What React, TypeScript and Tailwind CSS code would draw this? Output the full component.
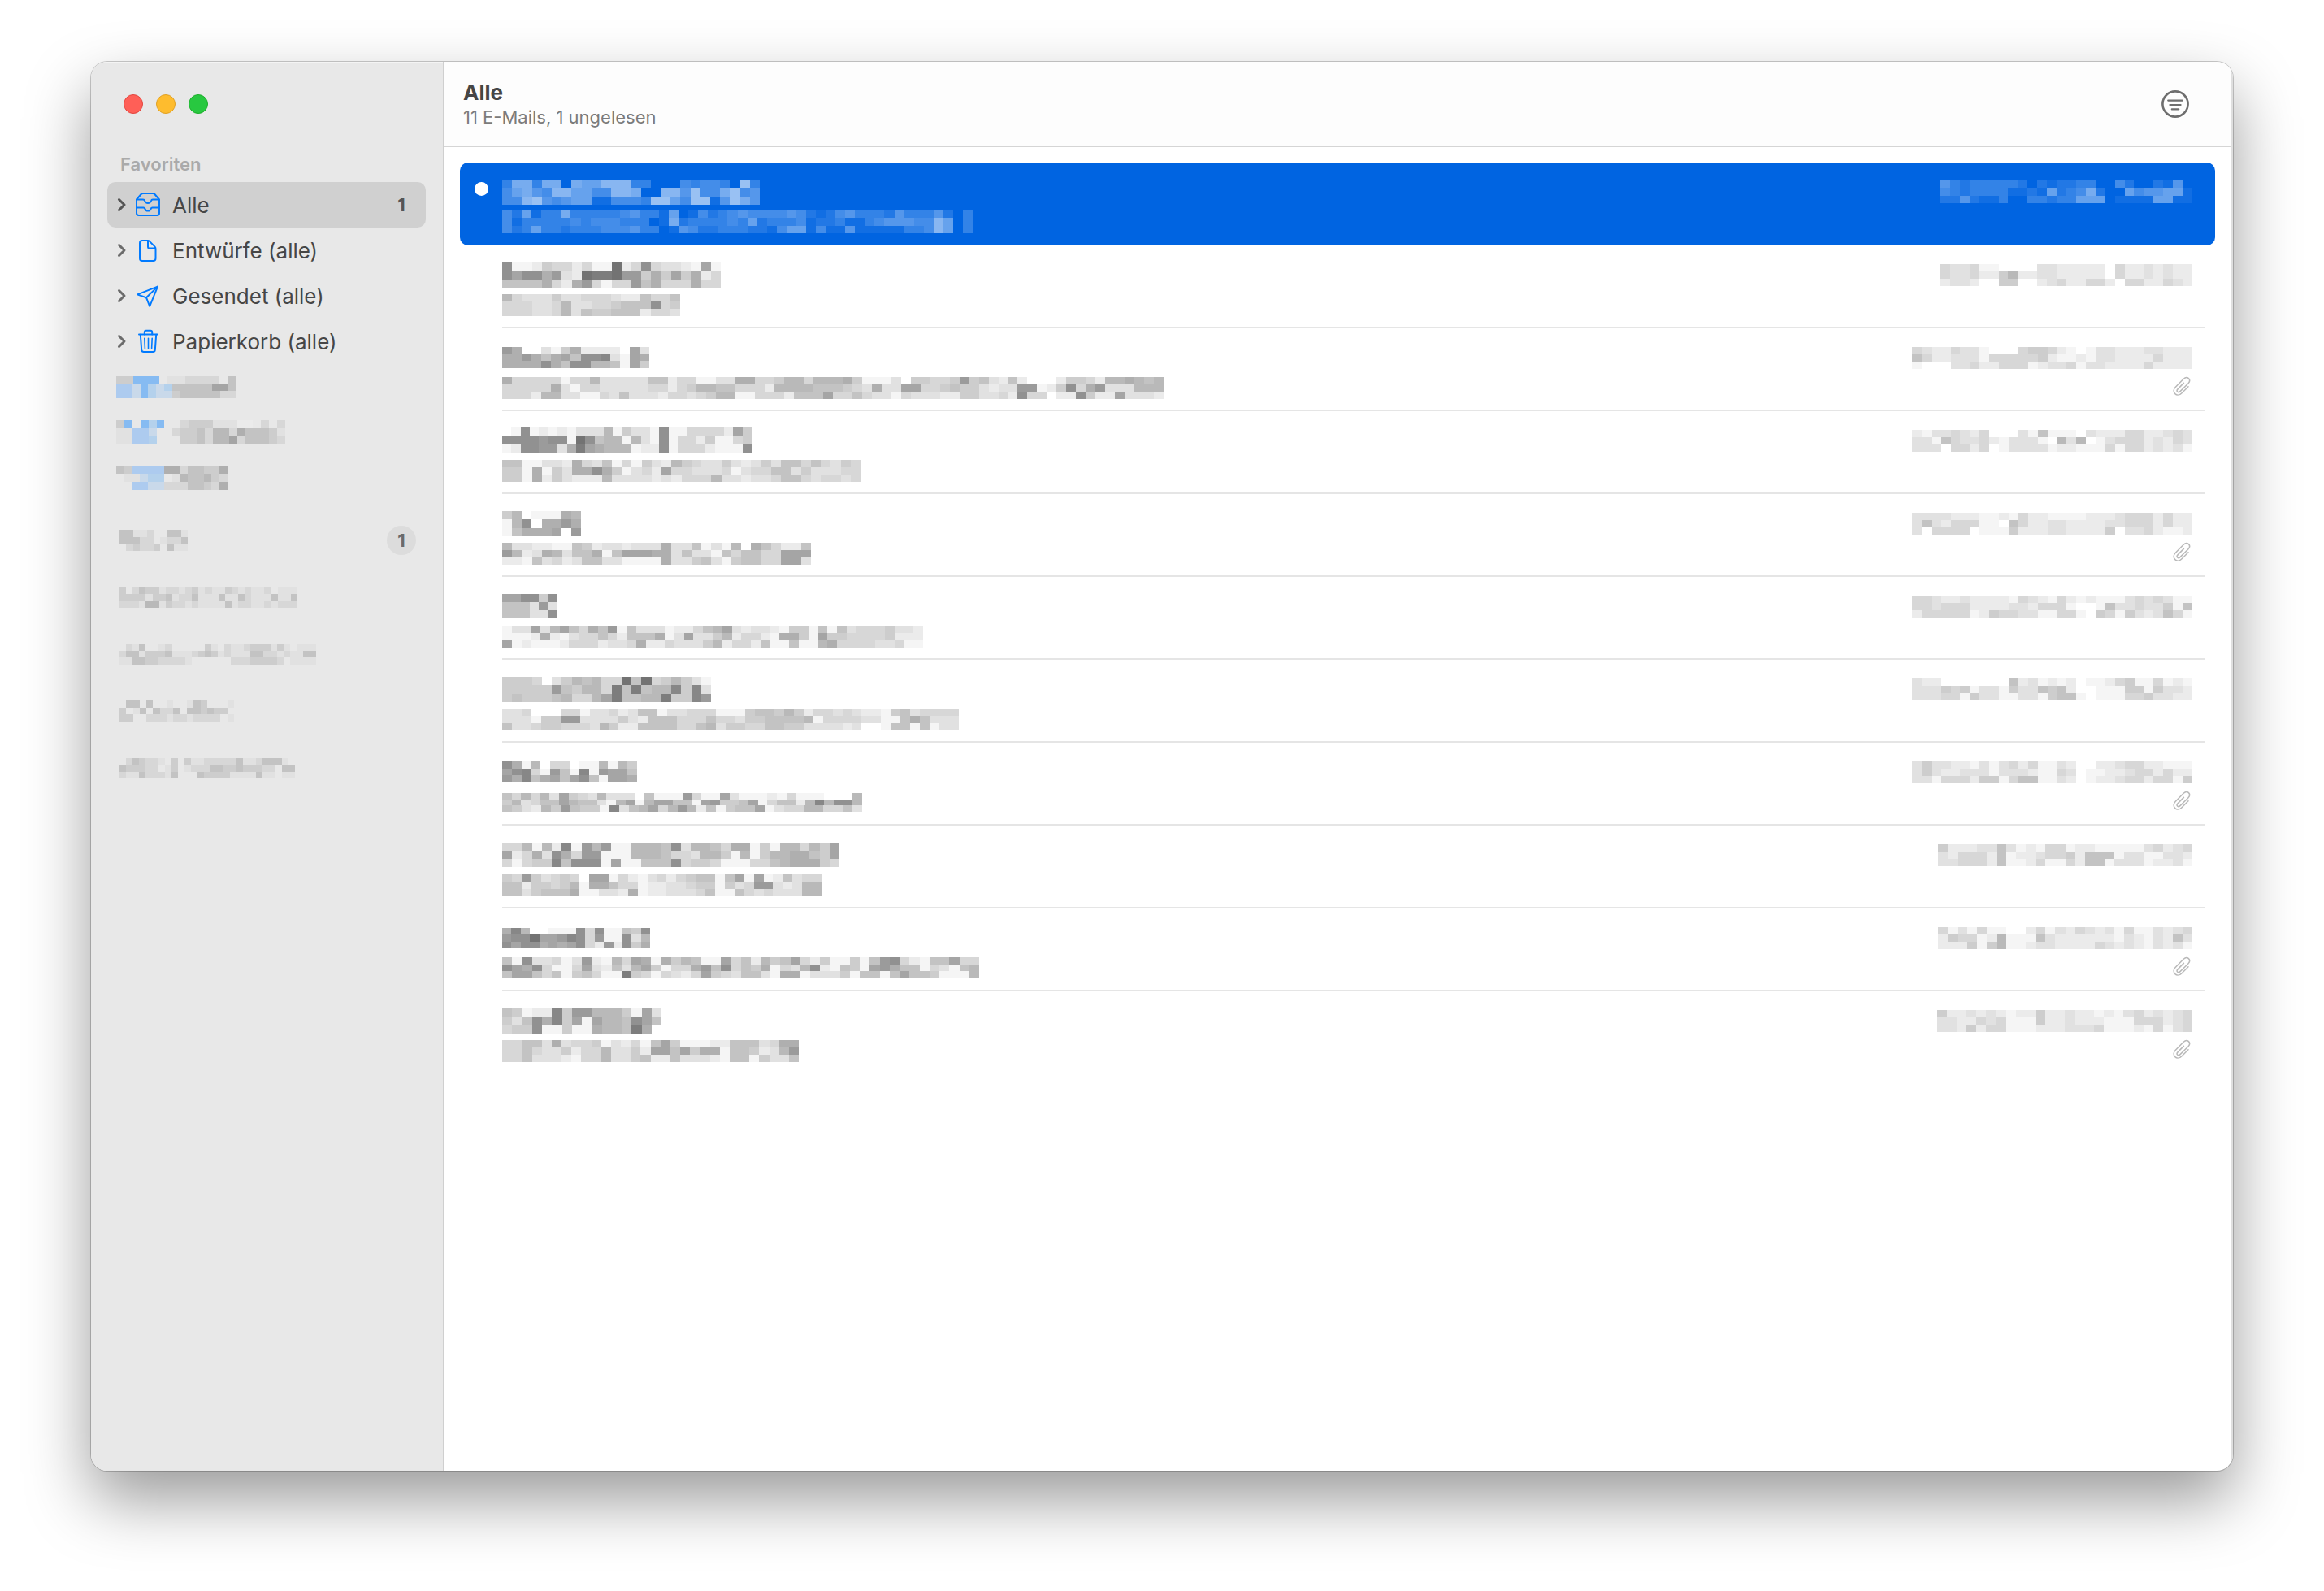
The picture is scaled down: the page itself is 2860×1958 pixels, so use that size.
import type { ReactNode } from "react";
import clsx from "clsx";

type Redaction = { w: number; h: number; rows: string[] };

type Mail = {
  title: Redaction;
  subject: Redaction;
  date: Redaction;
  attachment?: boolean;
  unread?: boolean;
};

const tints: Record<string, string> = {
  p: "#86bbf2",
  q: "#adcbef",
  r: "#c9d9ea",
  s: "#b4d1ec",
};

const accounts: Redaction[] = [
  { w: 148, h: 27, rows: ["55ppp.334444.6", "qqrpsrs66666996", "qqrpsrr56666644"] },
  { w: 208, h: 30, rows: ["5p.psp..455533322.4.4", "33qqr..45564774866653", "33qqs...5564779466654"] },
  { w: 137, h: 30, rows: ["65qqqq88466558", ".33rss.3766754", "..qqrr44466548"] },
];

const mailboxes: { name: Redaction; count?: number }[] = [
  { name: { w: 84, h: 26, rows: ["66334..663", "66644.3446", ".45445.633"] }, count: 1 },
  { name: { w: 219, h: 25, rows: ["5.465534434534335434334.333", "555535563446333633643336336", "444377354434333363443343444"] } },
  { name: { w: 242, h: 26, rows: [".436..34.....53.4334555353.333", "466355563334565343336644343366", "33665544443......44455554.3333"] } },
  { name: { w: 141, h: 26, rows: [".66.6..3..365...3", "5.36.6446.665655.", "55..44434434444.3"] } },
  { name: { w: 216, h: 25, rows: [".465443.5.5334444463346663.", "655544.35.34446655655544.66", "433644436...655553333633.33"] } },
];

const mails: Mail[] = [
  {
    unread: true,
    title: { w: 317, h: 31, rows: ["37737707668883300043443093", "46754886644887008859447945", "44895456611444399649915975"] },
    subject: {
      w: 579,
      h: 28,
      rows: [
        "426133733333453316014234544445421245333253335203",
        "413333343444333017233334362333412231134555448603",
        "423633233344453301542233322146614115111113348603",
      ],
    },
    date: { w: 310, h: 28, rows: ["53233333202122330042002150", "43233331121623472006455661", "22521130033233666011116611"] },
  },
  {
    title: { w: 269, h: 31, rows: ["b1125442411e24b4332191", "b9bb8a32eddeaa58595824", "66668428a4144a68444844"] },
    subject: { w: 219, h: 27, rows: ["743335334443226446", "444334733445666b45", "444334736556662443"] },
    date: { w: 310, h: 27, rows: ["43341100003322222042232322", "43342257223322222042232322", "23320055002342244204422432"] },
  },
  {
    attachment: true,
    title: { w: 181, h: 26, rows: ["a80031582222093", "88a86896bbc3198", "8888b86bb776195"] },
    subject: {
      w: 814,
      h: 27,
      rows: [
        "84444414473333366244113388445774777851113055445a5632620002554277876 7".replace(" ", ""),
        "44444831443333344245776644427777666543833994456553233aa125b48a333777",
        "44427733114363332443457711444266694464331433322553342b44022b52293332",
      ],
    },
    date: { w: 345, h: 27, rows: ["43224331000455421013322233222", "64223331444445211213322224222", "10003342244412334133222242222"] },
  },
  {
    title: { w: 307, h: 32, rows: ["01b12121333715331b114444295", "bbbbabb1eb6771731b144251145", "12bbaa38d98777122b14442111b"] },
    subject: {
      w: 441,
      h: 27,
      rows: [
        "661133284361415327543353235366464354",
        "551815388b85134294433341344663533344",
        "551825322273333232444733233466434434",
      ],
    },
    date: { w: 345, h: 27, rows: ["21334324000316111032224422343", "33164334213331073701344423243", "33304424013333122111414423231"] },
  },
  {
    attachment: true,
    title: { w: 97, h: 31, rows: ["57011187", "17b088a8", "1688890a"] },
    subject: {
      w: 380,
      h: 27,
      rows: ["7332211652332333833613170864226", "a723873668169998836331646644999", "2216342366331111833563156644993"],
    },
    date: { w: 345, h: 27, rows: ["33332221121422111122234442422", "36324441106422332222334442422", "30444401115222332222503342112"] },
  },
  {
    title: { w: 68, h: 30, rows: ["99bb5b", "6663a3", "66633b"] },
    subject: {
      w: 518,
      h: 27,
      rows: [
        "1339379648 6a16333122467932332155161634445332".replace(" ", ""),
        "11128213446426668139335724421885195544445222",
        "91211124442334822433357244261161178444433411",
      ],
    },
    date: { w: 345, h: 27, rows: ["44322322221432142121113434311", "44344422223324441001633433516", "24444412544331144105415323641"] },
  },
  {
    title: { w: 257, h: 31, rows: ["555403576744e6e457531", "55555a65774d6d677c5c3", "56555674479d6677d55ca"] },
    subject: {
      w: 562,
      h: 27,
      rows: [
        "33400044133423661334441115665752443432215634444",
        "333155aa333353266644464435566667144443311686333",
        "63345544437522666644673554466553333230016616133",
      ],
    },
    date: { w: 345, h: 27, rows: ["32200000006231212011245114121", "33354513315336562001115515332", "33344153311331566101114453322"] },
  },
  {
    attachment: true,
    title: { w: 166, h: 26, rows: ["b8170440117175", "9bc41a61c1a996", "a8c68969b61998"] },
    subject: {
      w: 443,
      h: 23,
      rows: ["6474739543733306111a411931112141110007", "5734669766317917996619a5569146627c7bb7", "653275a6551c367947a726156691344774463"],
    },
    date: { w: 345, h: 27, rows: ["35332213134241132002234422111", "35322333133321143011223442422", "33144425514661132012234424415"] },
  },
  {
    title: { w: 415, h: 30, rows: ["447172c1a7a117776b3776488151774759", "92483b84aa111777644377517157788659", "41455c6bbb1911666b4554111446788854"] },
    subject: {
      w: 393,
      h: 27,
      rows: ["54a534540991421342456616919126344", "66255457188644122334551534aa32377", "663566681133281223334611643433377"],
    },
    date: { w: 313, h: 27, rows: ["52223363121441221111134234", "32444261223445266613311332", "33444261124114266133312231"] },
  },
  {
    attachment: true,
    title: { w: 182, h: 25, rows: ["8c700111b4b1165b", "abbe99acb4a11b37", "b9bb8989b42a2b58"] },
    subject: {
      w: 587,
      h: 26,
      rows: [
        "61b33413a21749818576119462756942511516ab42166944",
        "b98b411493263795144 8a6b46581437b216519a866143167".replace(" ", ""),
        "699646156411d54143249543663188133351661696651117",
      ],
    },
    date: { w: 313, h: 27, rows: ["41314110024132432314113234", "25441271116322222213213263", "22251571123322224323213231"] },
  },
  {
    attachment: true,
    title: { w: 196, h: 31, rows: ["65122c5aa7775193", "536b8c5919776b96", "455b115118776d80"] },
    subject: {
      w: 365,
      h: 27,
      rows: ["446638344513241695111226663488", "44643352447335299695881665237a", "446333214473356226333216615336"],
    },
    date: { w: 314, h: 27, rows: ["52232321225223221213423234", "33224341115223222111444234", "33252441112223334111214134"] },
  },
];

// Pixelated stand-in for a redacted name, subject or date
function Mosaic({ data, light = false }: { data: Redaction; light?: boolean }) {
  const bandHeight = data.h / 3;

  return (
    <svg
      width={data.w}
      height={data.h}
      viewBox={`0 0 ${data.w} ${data.h}`}
      shapeRendering="crispEdges"
      className="shrink-0"
      aria-hidden="true"
    >
      {data.rows.map((row, y) => {
        const cells = row.split("");
        const cellWidth = data.w / cells.length;

        return cells.map((cell, x) => {
          if (cell === "." || cell === "0") return null;
          const level = parseInt(cell, 16);
          const shade = 255 - level * 10;

          return (
            <rect
              key={`${y}-${x}`}
              x={x * cellWidth}
              y={y * bandHeight}
              width={cellWidth}
              height={bandHeight}
              fill={tints[cell] ?? (light ? "#fff" : `rgb(${shade},${shade},${shade})`)}
              fillOpacity={light ? level / 15 : 1}
            />
          );
        });
      })}
    </svg>
  );
}

function Icon({ children }: { children: ReactNode }) {
  return (
    <svg
      width="32"
      height="32"
      viewBox="0 0 32 32"
      fill="none"
      stroke="#007aff"
      strokeWidth="2"
      strokeLinecap="round"
      strokeLinejoin="round"
      className="shrink-0"
      aria-hidden="true"
    >
      {children}
    </svg>
  );
}

const favorites = [
  {
    name: "Alle",
    count: 1,
    icon: (
      <Icon>
        <path d="M2 9.5 L7.6 3 Q8.5 2 10 2 H22 Q23.5 2 24.4 3 L30 9.5 V26.2 Q30 29 27.2 29 H4.8 Q2 29 2 26.2 Z" />
        <path d="M2.5 9.5 H10 Q11.6 9.5 12 11 Q13 14 16 14 Q19 14 20 11 Q20.4 9.5 22 9.5 H29.5" />
        <path d="M2 19.5 H10.6 Q11.8 19.5 12.2 20.6 Q13.2 23.6 16 23.6 Q18.8 23.6 19.8 20.6 Q20.2 19.5 21.4 19.5 H30" />
      </Icon>
    ),
  },
  {
    name: "Entwürfe (alle)",
    icon: (
      <Icon>
        <path d="M9 4 H15.6 Q17.2 4 18.2 5.1 L24.4 11.4 Q25.5 12.5 25.5 14 V26 Q25.5 29 22.5 29 H9 Q6 29 6 26 V7 Q6 4 9 4 Z" />
        <path d="M16 4.5 V11.4 Q16 13.6 18.2 13.6 H25" />
      </Icon>
    ),
  },
  {
    name: "Gesendet (alle)",
    icon: (
      <Icon>
        <path d="M28 4.6 L3 14.4 L14 18.2 L18.2 29 Z" />
        <path d="M28 4.6 L14 18.2" />
      </Icon>
    ),
  },
  {
    name: "Papierkorb (alle)",
    icon: (
      <Icon>
        <path d="M5 7.6 H28" />
        <path d="M11.8 7.4 V4.8 Q11.8 2.8 13.8 2.8 H19.2 Q21.2 2.8 21.2 4.8 V7.4" />
        <path d="M6.8 7.8 L8.2 26.6 Q8.4 29 10.8 29 H22.2 Q24.6 29 24.8 26.6 L26.2 7.8" />
        <path d="M11.8 12.2 L12.4 24.8 M16.5 12.2 V24.8 M21.2 12.2 L20.6 24.8" strokeWidth="1.6" />
      </Icon>
    ),
  },
];

function Paperclip() {
  return (
    <svg
      width="22"
      height="24"
      viewBox="0 0 22 24"
      fill="none"
      stroke="#b9b9b9"
      strokeWidth="1.5"
      strokeLinecap="round"
      className="mr-0.5 mb-1 shrink-0"
      role="img"
      aria-label="Anhang"
    >
      <path d="M19 12.7 L11 20.7 C8.5 23.2 5 23.7 2.8 21.6 C.5 19.3 .7 16 3.1 13.5 L13.2 3.3 C15 1.5 17.6 .9 19.4 2.6 C21.2 4.4 20.8 6.8 19 8.7 L9 18.6 C7.8 19.8 6.5 19.9 5.6 19 C4.8 18.1 5 16.9 6 15.9 L13.4 8.4" />
    </svg>
  );
}

function Sidebar() {
  return (
    <aside className="w-[434px] shrink-0 border-r border-[#cfcfcf] bg-[#e8e8e8] pt-10 shadow-[inset_0_2px_0_#f4f4f4]">
      {/* Window controls */}
      <div className="flex gap-4 px-10">
        <button aria-label="Schließen" className="size-6 rounded-full border border-[#e2463f] bg-[#ff5f57]" />
        <button aria-label="Minimieren" className="size-6 rounded-full border border-[#e0a125] bg-[#febc2e]" />
        <button aria-label="Vergrößern" className="size-6 rounded-full border border-[#1dad2b] bg-[#28c840]" />
      </div>

      <h2 className="mt-12 mb-2 pl-9 text-[22px] leading-7 font-semibold text-[#aaaaaa]">Favoriten</h2>

      <nav className="pr-[21px] pl-5">
        <ul>
          {favorites.map((item, i) => (
            <li key={item.name}>
              <button
                className={clsx(
                  "flex h-14 w-full items-center rounded-[10px] px-3 text-left text-[26px] text-[#464646]",
                  i === 0 && "bg-[#d0d0d0]"
                )}
              >
                <svg width="12" height="20" viewBox="0 0 12 20" fill="none" className="shrink-0" aria-hidden="true">
                  <path
                    d="M2.5 3.5 L9 10 L2.5 16.5"
                    stroke={i === 0 ? "#555" : "#6c6c6c"}
                    strokeWidth="3"
                    strokeLinecap="round"
                    strokeLinejoin="round"
                  />
                </svg>
                <span className="mr-3.5 ml-2.5">{item.icon}</span>
                <span className="flex-1">{item.name}</span>
                {item.count && (
                  <span className="w-9 text-center text-[22px] font-bold text-[#555555]">{item.count}</span>
                )}
              </button>
            </li>
          ))}
          {accounts.map((account, i) => (
            <li key={i} className="flex h-14 items-center pl-[11px]">
              <Mosaic data={account} />
            </li>
          ))}
        </ul>

        <ul className="mt-[14px]">
          {mailboxes.map((box, i) => (
            <li key={i} className="flex h-[70px] items-center justify-between pr-3 pl-[15px]">
              <Mosaic data={box.name} />
              {box.count && (
                <span className="flex size-9 items-center justify-center rounded-full bg-[#dcdcdc] text-[22px] font-bold text-[#6a6a6a]">
                  {box.count}
                </span>
              )}
            </li>
          ))}
        </ul>
      </nav>
    </aside>
  );
}

function MailRow({ mail, last }: { mail: Mail; last: boolean }) {
  const selected = mail.unread;

  return (
    <li className={clsx("flex h-[102px] rounded-[10px]", selected && "bg-[#0064e1]")}>
      <div className="w-[52px] shrink-0 pt-6 pl-[18px]">
        {selected && <div className="size-[17px] rounded-full bg-white" />}
      </div>
      <div
        className={clsx(
          "mr-3 flex-1 border-b-2 pt-5 pr-4",
          selected || last ? "border-transparent" : "border-[#e5e5e5]"
        )}
      >
        <div className="flex h-8 items-center justify-between">
          <Mosaic data={mail.title} light={selected} />
          <Mosaic data={mail.date} light={selected} />
        </div>
        <div className="mt-[7px] flex h-7 items-center justify-between">
          <Mosaic data={mail.subject} light={selected} />
          {mail.attachment && <Paperclip />}
        </div>
      </div>
    </li>
  );
}

export default function App() {
  return (
    <div className="flex min-h-screen bg-white px-28 pt-[76px] pb-[148px] font-['Inter',sans-serif]">
      <div className="flex flex-1 overflow-hidden rounded-[20px] bg-white shadow-[0_0_0_1px_rgba(0,0,0,0.2),0_36px_80px_rgba(0,0,0,0.4)]">
        <Sidebar />

        <main className="min-w-0 flex-1 border-r-2 border-[#dfdfdf]">
          <header className="flex h-[105px] items-center justify-between border-b border-[#d5d5d5] bg-[#fdfdfd] pr-[52px] pl-6">
            <div>
              <h1 className="text-[26px] leading-8 font-bold text-[#464646]">Alle</h1>
              <p className="text-[22px] leading-7 text-[#7b7b7b]">11 E-Mails, 1 ungelesen</p>
            </div>
            <button aria-label="Filter">
              <svg
                width="34"
                height="34"
                viewBox="0 0 34 34"
                fill="none"
                stroke="#6e6e6e"
                strokeLinecap="round"
                aria-hidden="true"
              >
                <circle cx="17" cy="17" r="15.6" strokeWidth="2.6" />
                <path d="M8.2 12.6 H25.8 M10.4 18 H23.6 M12.8 23.4 H21.2" strokeWidth="2.2" />
              </svg>
            </button>
          </header>

          <ul className="px-5 pt-[19px]">
            {mails.map((mail, i) => (
              <MailRow key={i} mail={mail} last={i === mails.length - 1} />
            ))}
          </ul>
        </main>
      </div>
    </div>
  );
}
